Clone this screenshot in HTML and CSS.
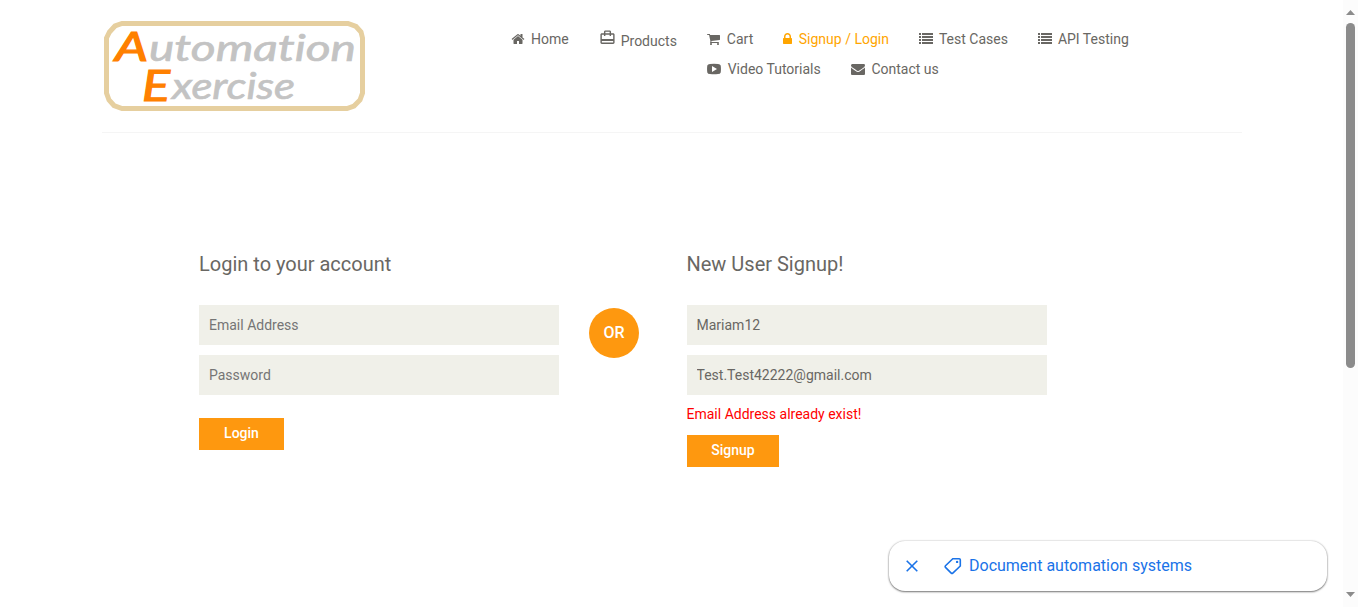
FILE: index.html
```html
<!DOCTYPE html>
<html lang="en">
<head>
<meta charset="utf-8">
<title>Automation Exercise - Signup / Login</title>
<link rel="stylesheet" href="styles.css">
</head>
<body>
<div class="viewport">
<div class="page">
  <header class="header">
    <svg class="logo" width="262" height="90" viewBox="0 0 262 90">
      <path class="logo-frame" d="M18 2.5H244L252 5.5L257 11L258.500 17V72L256 79L250 85L243 87.500H18L10 84.500L5 79L2.500 72V17L5.500 11L11 5Z"/>
      <text class="logo-cap" x="11" y="40" font-size="41" textLength="33" lengthAdjust="spacingAndGlyphs">A</text>
      <text class="logo-rest" x="45" y="40" font-size="37" textLength="207" lengthAdjust="spacingAndGlyphs">utomation</text>
      <text class="logo-cap" x="38" y="80" font-size="43" textLength="28" lengthAdjust="spacingAndGlyphs">E</text>
      <text class="logo-rest" x="68" y="78" font-size="37" textLength="123" lengthAdjust="spacingAndGlyphs">xercise</text>
    </svg>
    <nav class="nav">
      <div class="nav-row">
        <a class="nav-item"><svg class="icon" viewBox="0 0 1792 1792"><path d="M1472 992v480q0 26-19 45t-45 19h-384v-384h-256v384h-384q-26 0-45-19t-19-45v-480q0-1 .5-3t.5-3l575-474 575 474q1 2 1 6zm223-69l-62 74q-8 9-21 11h-3q-13 0-21-7l-692-577-692 577q-12 8-24 7-13-2-21-11l-62-74q-8-10-7-23.500t11-21.500l719-599q32-26 76-26t76 26l244 204v-195q0-14 9-23t23-9h192q14 0 23 9t9 23v408l219 182q10 8 11 21.500t-7 23.500z"/></svg>Home</a>
        <a class="nav-item nav-item-products"><svg class="icon icon-products" viewBox="0 0 24 24"><path d="M20 6h-3V4c0-1.110-.89-2-2-2H9c-1.110 0-2 .89-2 2v2H4c-1.110 0-2 .89-2 2v11c0 1.110.89 2 2 2h16c1.110 0 2-.89 2-2V8c0-1.110-.89-2-2-2zM9 4h6v2H9V4zm11 15H4v-2h16v2zm0-5H4V8h3v2h2V8h6v2h2V8h3v6z"/></svg>Products</a>
        <a class="nav-item"><svg class="icon" viewBox="64 0 1792 1792"><path d="M704 1536q0 52-38 90t-90 38-90-38-38-90 38-90 90-38 90 38 38 90zm896 0q0 52-38 90t-90 38-90-38-38-90 38-90 90-38 90 38 38 90zm128-1088v512q0 24-16.500 42.500t-40.500 21.500l-1044 122q13 60 13 70 0 16-24 64h920q26 0 45 19t19 45-19 45-45 19h-1024q-26 0-45-19t-19-45q0-11 8-31.500t16-36 21.500-40 15.500-29.500l-177-823h-204q-26 0-45-19t-19-45 19-45 45-19h256q16 0 28.500 6.500t19.500 15.500 13 24.500 8 26 5.500 29.500 4.500 26h1201q26 0 45 19t19 45z"/></svg>Cart</a>
        <a class="nav-item active"><svg class="icon icon-lock" viewBox="320 0 1152 1792"><path d="M640 768h512v-192q0-106-75-181t-181-75-181 75-75 181v192zm832 96v576q0 40-28 68t-68 28h-960q-40 0-68-28t-28-68v-576q0-40 28-68t68-28h32v-192q0-184 132-316t316-132 316 132 132 316v192h32q40 0 68 28t28 68z"/></svg>Signup / Login</a>
        <a class="nav-item"><svg class="icon" viewBox="0 0 14 14"><path d="M0 1h2v2H0zM3 1h11v2H3zM0 4h2v2H0zM3 4h11v2H3zM0 7h2v2H0zM3 7h11v2H3zM0 10h2v2H0zM3 10h11v2H3z"/></svg>Test Cases</a>
        <a class="nav-item"><svg class="icon" viewBox="0 0 14 14"><path d="M0 1h2v2H0zM3 1h11v2H3zM0 4h2v2H0zM3 4h11v2H3zM0 7h2v2H0zM3 7h11v2H3zM0 10h2v2H0zM3 10h11v2H3z"/></svg>API Testing</a>
      </div>
      <div class="nav-row nav-row-second">
        <a class="nav-item"><svg class="icon" viewBox="0 0 14 14"><path fill-rule="evenodd" d="M3 2Q7 1.600 11 2Q13.300 2 13.700 3.500Q14.200 7 13.700 10.500Q13.300 12 11 12Q7 12.400 3 12Q.7 12 .3 10.500Q-.2 7 .3 3.500Q.7 2 3 2ZM5 4V10L10 7Z"/></svg>Video Tutorials</a>
        <a class="nav-item"><svg class="icon" viewBox="0 0 1792 1792"><path d="M1792 710v794q0 66-47 113t-113 47h-1472q-66 0-113-47t-47-113v-794q44 49 101 87 362 246 497 345 57 42 92.500 65.500t94.500 48 110 24.500h2q51 0 110-24.500t94.500-48 92.500-65.500q170-123 498-345 57-39 100-87zm0-294q0 79-49 151t-122 123q-376 261-468 325-10 7-42.500 31t-54 38.500-52 32.500-57.500 27-50 9h-2q-23 0-50-9t-57.500-27-52-32.500-54-38.500-42.500-31q-91-64-262-182.500t-205-142.500q-62-42-117-115.500t-55-136.500q0-78 41.500-130t118.500-52h1472q65 0 112.500 47t47.500 113z"/></svg>Contact us</a>
      </div>
    </nav>
  </header>
  <main class="forms">
    <form class="form">
      <h2 class="form-title">Login to your account</h2>
      <input class="field" type="email" placeholder="Email Address">
      <input class="field" type="password" placeholder="Password">
      <button class="button button-login" type="button">Login</button>
    </form>
    <div class="or">OR</div>
    <form class="form">
      <h2 class="form-title">New User Signup!</h2>
      <input class="field" type="text" value="Mariam12">
      <input class="field" type="text" value="Test.Test42222@gmail.com">
      <p class="error">Email Address already exist!</p>
      <button class="button button-signup" type="button">Signup</button>
    </form>
  </main>
</div>
<aside class="scrollbar">
  <svg width="9" height="5" viewBox="0 0 9 5"><path d="M4.500 0L9 5H0Z"/></svg>
  <div class="thumb"></div>
  <svg class="arrow-down" width="9" height="5" viewBox="0 0 9 5"><path d="M0 0H9L4.500 5Z"/></svg>
</aside>
</div>
<div class="suggestion">
  <svg class="close" width="12" height="12" viewBox="0 0 12 12"><path d="M.7 .7L11.300 11.300M11.300 .7L.7 11.300"/></svg>
  <svg class="tag" width="18" height="18" viewBox="0 0 18 18"><path d="M8.800 1.700H15.200Q16.300 1.700 16.300 2.800V9L8.800 16.100Q8 16.800 7.200 16.100L1.500 10.400Q.8 9.600 1.500 8.800Z"/><circle cx="13.100" cy="4.900" r="1.200"/></svg>
  <span>Document automation systems</span>
</div>
</body>
</html>
```
FILE: styles.css
```css
* { box-sizing: border-box; }
body {
  margin: 0;
  overflow: hidden;
  background: #fff;
  color: #696763;
  font: 14px/20px Roboto, sans-serif;
}
.viewport { display: flex; height: 607px; }
.page { flex: 1; }
.header {
  display: flex;
  width: 1140px;
  height: 133px;
  margin: 0 auto;
  padding: 21px 0 0 2px;
  border-bottom: 1px solid #f5f5f5;
}
.logo { flex: none; }
.logo-frame { fill: #fff; stroke: #e6cf9f; stroke-width: 5; }
.logo-cap, .logo-rest {
  font-family: Lato, sans-serif;
  font-style: italic;
  font-weight: 400;
  font-variant-ligatures: none;
  stroke-width: .7;
}
.logo-cap { fill: #ff8000; stroke: #ff8000; stroke-width: 1.2; }
.logo-rest { fill: #c3c3c3; stroke: #c3c3c3; }
.nav { padding: 8px 0 0 145.5px; }
.nav-row { display: flex; gap: 30px; height: 30px; }
.nav-row-second { padding-left: 196px; }
.nav-item { display: flex; align-items: center; height: 20px; white-space: nowrap; }
.nav-item-products { margin-top: 2px; }
.active { color: #ffa500; }
.icon { width: 14px; height: 14px; margin-right: 6px; fill: currentColor; }
.icon-lock { width: 9px; margin-right: 6.5px; }
.nav-row-second .icon { margin-right: 6.7px; }
.icon-products { width: 17px; height: 17px; margin: -7px 5px 0 0; }
.forms {
  display: flex;
  width: 1140px;
  margin: 0 auto;
  padding: 120px 0 0 97.5px;
}
.form { display: flex; flex-direction: column; align-items: flex-start; width: 360px; }
.form-title { margin: 0 0 30px; font-size: 20px; font-weight: 400; line-height: 22px; }
.field {
  width: 100%;
  height: 40px;
  margin: 0 0 10px;
  padding: 0 10px;
  border: 0;
  background: #f0f0e9;
  color: #696763;
  font: 14px Roboto, sans-serif;
}
.field::placeholder { color: #757575; }
.button {
  height: 32px;
  padding: 0 0 2px;
  border: 0;
  background: #fe980f;
  color: #fff;
  font: 500 14px Roboto, sans-serif;
}
.button-login { width: 85px; margin-top: 13px; }
.button-signup { width: 92px; padding-left: 1px; }
.error { margin: -1px 0 11px; color: #f00; }
.or {
  width: 50px;
  height: 50px;
  margin: 55px 47.5px 0 30px;
  border-radius: 50%;
  background: #fe980f;
  color: #fff;
  font-size: 16px;
  font-weight: 500;
  line-height: 50px;
  text-align: center;
}
.scrollbar {
  display: flex;
  flex-direction: column;
  align-items: center;
  width: 15px;
  padding: 10px 0;
  background: #fcfcfc;
  fill: #8b8b8b;
}
.thumb { width: 9px; height: 345px; margin-top: 8px; border-radius: 5px; background: #8b8b8b; }
.arrow-down { margin-top: auto; }
.suggestion {
  position: absolute;
  left: 889px;
  top: 541px;
  display: flex;
  align-items: center;
  width: 438px;
  height: 50px;
  padding-left: 17px;
  border-radius: 16px;
  background: #fff;
  box-shadow: 0 1px 2px rgba(0, 0, 0, .5), 0 0 2px rgba(0, 0, 0, .25);
  color: #1a73e8;
  font-size: 16px;
}
.close { margin-right: 26px; stroke: currentColor; stroke-width: 1.6; }
.tag { margin-right: 7px; fill: none; stroke: currentColor; stroke-width: 1.6; }
.tag circle { fill: currentColor; stroke: none; }
```
